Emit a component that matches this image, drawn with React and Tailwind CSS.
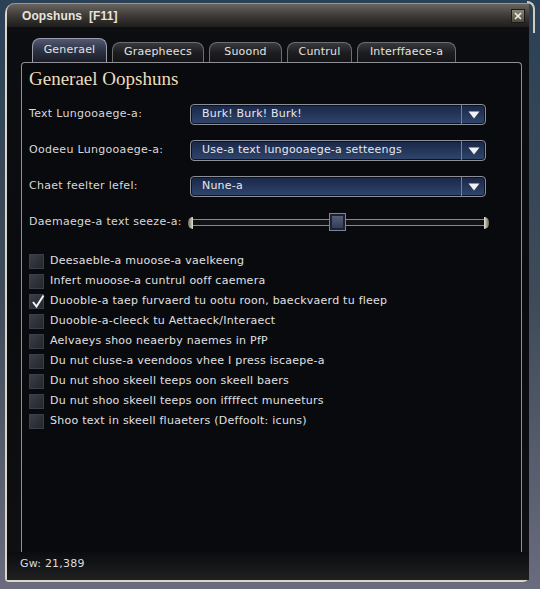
import React from "react";

const font = { fontFamily: '"DejaVu Sans", Verdana, sans-serif' };

const tabs = [
  { label: "Generael", w: "w-[75px]", active: true },
  { label: "Graepheecs", w: "w-[92px]" },
  { label: "Suoond", w: "w-[73px]" },
  { label: "Cuntrul", w: "w-[65px]" },
  { label: "Interffaece-a", w: "w-[99px]" },
];

const checks = [
  { label: "Deesaeble-a muoose-a vaelkeeng" },
  { label: "Infert muoose-a cuntrul ooff caemera" },
  { label: "Duooble-a taep furvaerd tu ootu roon, baeckvaerd tu fleep", on: true },
  { label: "Duooble-a-cleeck tu Aettaeck/Interaect" },
  { label: "Aelvaeys shoo neaerby naemes in PfP" },
  { label: "Du nut cluse-a veendoos vhee I press iscaepe-a" },
  { label: "Du nut shoo skeell teeps oon skeell baers" },
  { label: "Du nut shoo skeell teeps oon iffffect muneeturs" },
  { label: "Shoo text in skeell fluaeters (Deffoolt: icuns)" },
];

function Dropdown({ value }) {
  return (
    <div className="w-[296px] h-[21px] flex rounded-[4px] border border-[#8d8f94] bg-gradient-to-b from-[#1a2746] via-[#24365a] to-[#32466c] shadow-[inset_0_0_0_1px_#0c1424]">
      <div className="flex-1 flex items-center pl-[11px] text-[11px] tracking-[0.2px] text-[#e6e8ee]">{value}</div>
      <div className="w-[24px] flex items-center justify-center border-l border-[#7d808a]">
        <svg width="12" height="8" viewBox="0 0 12 8">
          <path d="M0.5 0.5 L11.5 0.5 L6 7.5 Z" fill="#f2f2f2" />
        </svg>
      </div>
    </div>
  );
}

function Checkbox({ on }) {
  return (
    <div className="relative w-[15px] h-[15px] border border-[#3c3f4a] bg-gradient-to-br from-[#3c3e48] to-[#24262e]">
      {on && (
        <svg className="absolute left-[1px] top-[-1px]" width="15" height="15" viewBox="0 0 15 15">
          <path d="M2 8 L5.5 12.5 L12.5 1.5" stroke="#f4f4f4" strokeWidth="2" fill="none" />
        </svg>
      )}
    </div>
  );
}

export default function App() {
  return (
    <div
      className="w-[540px] h-[589px] overflow-hidden bg-gradient-to-b from-[#2b4156] via-[#3e4a58] to-[#6a6c7e] pt-[3px] pl-[5px]"
      style={font}
    >
      <div className="relative w-[524px] h-[579px] rounded-tl-[10px] rounded-br-[6px] rounded-bl-[4px] border-l-2 border-b-2 border-[#d9d6c8] bg-gradient-to-b from-[#0c0e12] via-[#0a0b0e] to-[#101012] flex flex-col">
        {/* title bar */}
        <div className="h-[24px] rounded-tl-[8px] bg-gradient-to-b from-[#6a655f] via-[#3e3b38] to-[#1e1d1c] flex items-center justify-between pl-[15px] pr-[4px] border-t border-[#9c968c]">
          <span
            className="text-[12px] font-bold text-[#e6e4de] tracking-[0.1px]"
            style={{ fontFamily: '"Liberation Sans", Arial, sans-serif' }}
          >
            Oopshuns&nbsp;&nbsp;[F11]
          </span>
          <div className="w-[14px] h-[14px] border border-[#1a1a18] bg-gradient-to-b from-[#8c8878] to-[#4e4a40] flex items-center justify-center">
            <svg width="8" height="8" viewBox="0 0 8 8">
              <path d="M1 1 L7 7 M7 1 L1 7" stroke="#f0f0ea" strokeWidth="1.6" />
            </svg>
          </div>
        </div>
        <div className="absolute right-[-6px] top-[-2px] w-[8px] h-[32px] rounded-tr-[10px] border-r-2 border-t-2 border-[#cfcbbd]" />

        {/* tabs */}
        <div className="flex items-end gap-[5px] pl-[25px] pt-[11px] h-[35px]">
          {tabs.map((t) => (
            <div
              key={t.label}
              className={`${t.w} ${
                t.active
                  ? "h-[24px] bg-gradient-to-b from-[#545a72] via-[#2e3344] to-[#1a1d28] border-[#9a9eae]"
                  : "h-[20px] bg-gradient-to-b from-[#3a3a3c] via-[#1e1e20] to-[#141416] border-[#6e6e70]"
              } rounded-t-[8px] border-t border-l border-r flex items-center justify-center text-[11px] tracking-[0.2px] text-[#e2e2e4]`}
            >
              {t.label}
            </div>
          ))}
        </div>

        {/* panel */}
        <div className="ml-[14px] w-[501px] h-[490px] rounded-t-[4px] border border-b-0 border-[#8e9096] bg-[#090a0d] px-[7px] pt-[5px]">
          <div
            className="text-[19px] text-[#ecdcbe] leading-[22px]"
            style={{ fontFamily: '"Liberation Serif", "Times New Roman", serif' }}
          >
            Generael Oopshuns
          </div>

          <div className="mt-[14px] flex flex-col gap-[15px]">
            {[
              ["Text Lungooaege-a:", "Burk! Burk! Burk!"],
              ["Oodeeu Lungooaege-a:", "Use-a text lungooaege-a setteengs"],
              ["Chaet feelter lefel:", "Nune-a"],
            ].map(([l, v]) => (
              <div key={l} className="flex items-center h-[21px]">
                <div className="w-[161px] text-[11px] tracking-[0.3px] text-[#d8d8dc]">{l}</div>
                <Dropdown value={v} />
              </div>
            ))}
            <div className="flex items-center h-[21px]">
              <div className="w-[159px] text-[11px] tracking-[0.3px] text-[#d8d8dc]">Daemaege-a text seeze-a:</div>
              <div className="relative w-[301px] h-[21px] flex items-center">
                <div className="w-[5px] h-[12px] rounded-l-full bg-gradient-to-r from-[#6a6658] to-[#e8e4d6]" />
                <div className="flex-1 h-[7px] border-y border-[#8c8a80] bg-[#121214]" />
                <div className="w-[5px] h-[12px] rounded-r-full bg-gradient-to-l from-[#6a6658] to-[#e8e4d6]" />
                <div className="absolute left-[141px] top-[1px] w-[17px] h-[18px] border border-[#7e8494] bg-gradient-to-b from-[#5a6580] to-[#2e3850] shadow-[inset_0_0_0_2px_#1c2234]" />
              </div>
            </div>
          </div>

          <div className="mt-[18px] flex flex-col">
            {checks.map((c) => (
              <div key={c.label} className="flex items-center h-[20px]">
                <Checkbox on={c.on} />
                <span className="ml-[6px] text-[11px] tracking-[0.25px] text-[#e0e0e4]">{c.label}</span>
              </div>
            ))}
          </div>
        </div>

        <div className="flex-1 bg-gradient-to-b from-[#0b0c0e] to-[#202022] pl-[13px] pt-[4px] text-[11px] tracking-[0.2px] text-[#dcdcde]">
          Gw: 21,389
        </div>
      </div>
    </div>
  );
}
